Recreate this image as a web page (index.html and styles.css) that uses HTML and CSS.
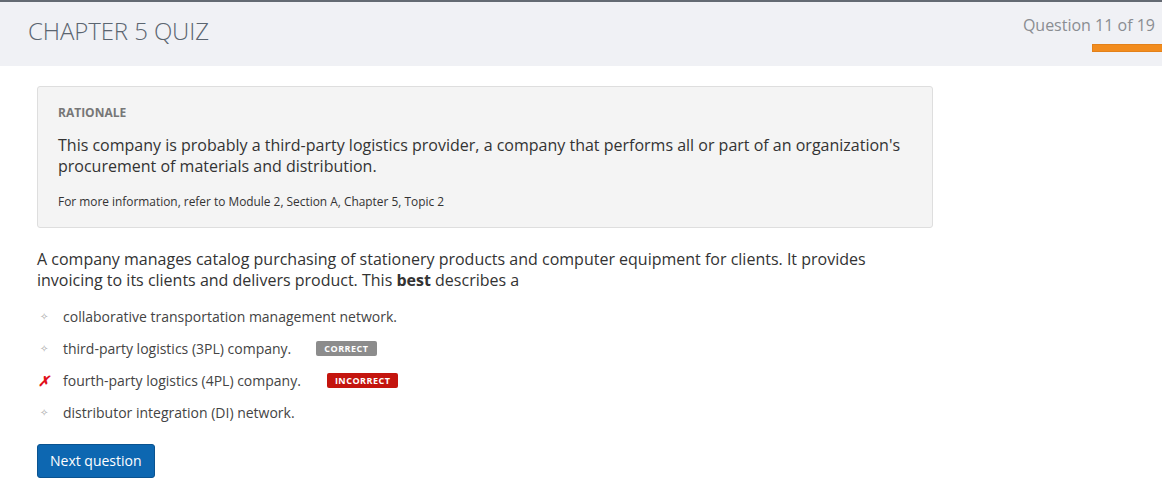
FILE: index.html
```html
<!DOCTYPE html>
<html>
<head>
<meta charset="utf-8">
<link rel="stylesheet" href="styles.css">
</head>
<body>
<header class="top">
  <h1 class="title">CHAPTER 5 QUIZ</h1>
  <div class="progress">
    <div class="count">Question 11 of 19</div>
    <div class="bar"></div>
  </div>
</header>
<main class="content">
  <section class="rationale">
    <div class="label">RATIONALE</div>
    <p class="why">This company is probably a third-party logistics provider, a company that performs all or part of an organization's procurement of materials and distribution.</p>
    <p class="ref">For more information, refer to Module 2, Section A, Chapter 5, Topic 2</p>
  </section>
  <p class="question">A company manages catalog purchasing of stationery products and computer equipment for clients. It provides invoicing to its clients and delivers product. This <b>best</b> describes a</p>
  <ul class="options">
    <li><span class="mark dot">✧</span><span class="opt">collaborative transportation management network.</span></li>
    <li><span class="mark dot">✧</span><span class="opt">third-party logistics (3PL) company.</span><span class="badge ok">CORRECT</span></li>
    <li><span class="mark x">✗</span><span class="opt">fourth-party logistics (4PL) company.</span><span class="badge bad">INCORRECT</span></li>
    <li><span class="mark dot">✧</span><span class="opt">distributor integration (DI) network.</span></li>
  </ul>
  <button class="next">Next question</button>
</main>
</body>
</html>
```
FILE: styles.css
```css
* { box-sizing: border-box; }
body {
  margin: 0;
  font-family: "Open Sans", "Liberation Sans", sans-serif;
  background: #fff;
  color: #333;
}
.top {
  border-top: 2px solid #646a73;
  background: #f0f1f5;
  height: 66px;
  display: flex;
  justify-content: space-between;
  align-items: flex-start;
}
.title {
  margin: 13px 0 0 28px;
  font-weight: 300;
  font-size: 24px;
  line-height: 32px;
  color: #5b6570;
  letter-spacing: -0.1px;
}
.progress {
  display: flex;
  flex-direction: column;
  align-items: flex-end;
  padding-top: 13px;
}
.count {
  font-size: 16px;
  line-height: 20px;
  color: #8a8d92;
  margin-right: 7px;
}
.bar {
  margin-top: 9px;
  width: 70px;
  height: 8px;
  background: #f28c1e;
  border: 1px solid #e3811a;
  border-right: none;
}
.content {
  padding: 20px 0 0 37px;
  width: 933px;
}
.rationale {
  background: #f4f4f4;
  border: 1px solid #dedede;
  border-radius: 3px;
  padding: 18px 20px 18px 20px;
}
.label {
  font-size: 12px;
  font-weight: 700;
  color: #777;
  line-height: 16px;
}
.why {
  margin: 14px 0 0;
  font-size: 16px;
  line-height: 21px;
  color: #333;
}
.ref {
  margin: 16px 0 0;
  font-size: 11.9px;
  line-height: 16px;
  color: #333;
}
.question {
  margin: 21px 0 0;
  font-size: 16px;
  line-height: 21px;
  color: #333;
  padding-right: 40px;
}
.question b { font-weight: 700; }
.options {
  list-style: none;
  margin: 9px 0 0;
  padding: 0;
}
.options li {
  display: flex;
  align-items: center;
  height: 32px;
  font-size: 14px;
  color: #444;
}
.mark {
  width: 26px;
  text-align: left;
}
.dot {
  font-size: 10px;
  color: #aaa;
  padding-left: 3px;
}
.x {
  color: #e1111a;
  font-size: 14px;
  font-weight: 700;
  font-style: italic;
  padding-left: 1px;
}
.badge {
  margin-left: 25px;
  font-size: 9px;
  font-weight: 700;
  letter-spacing: 0.5px;
  color: #fff;
  border-radius: 2px;
  padding: 1px 8px;
  line-height: 13px;
}
.ok { background: #8c8c8c; }
.bad { background: #c4150e; margin-left: 26px; }
.next {
  margin-top: 16px;
  font-family: "Open Sans", "Liberation Sans", sans-serif;
  font-size: 14px;
  color: #fff;
  background: #0d67b1;
  border: 1px solid #0a5390;
  border-radius: 3px;
  padding: 0 12px;
  height: 34px;
  line-height: 32px;
}
```
